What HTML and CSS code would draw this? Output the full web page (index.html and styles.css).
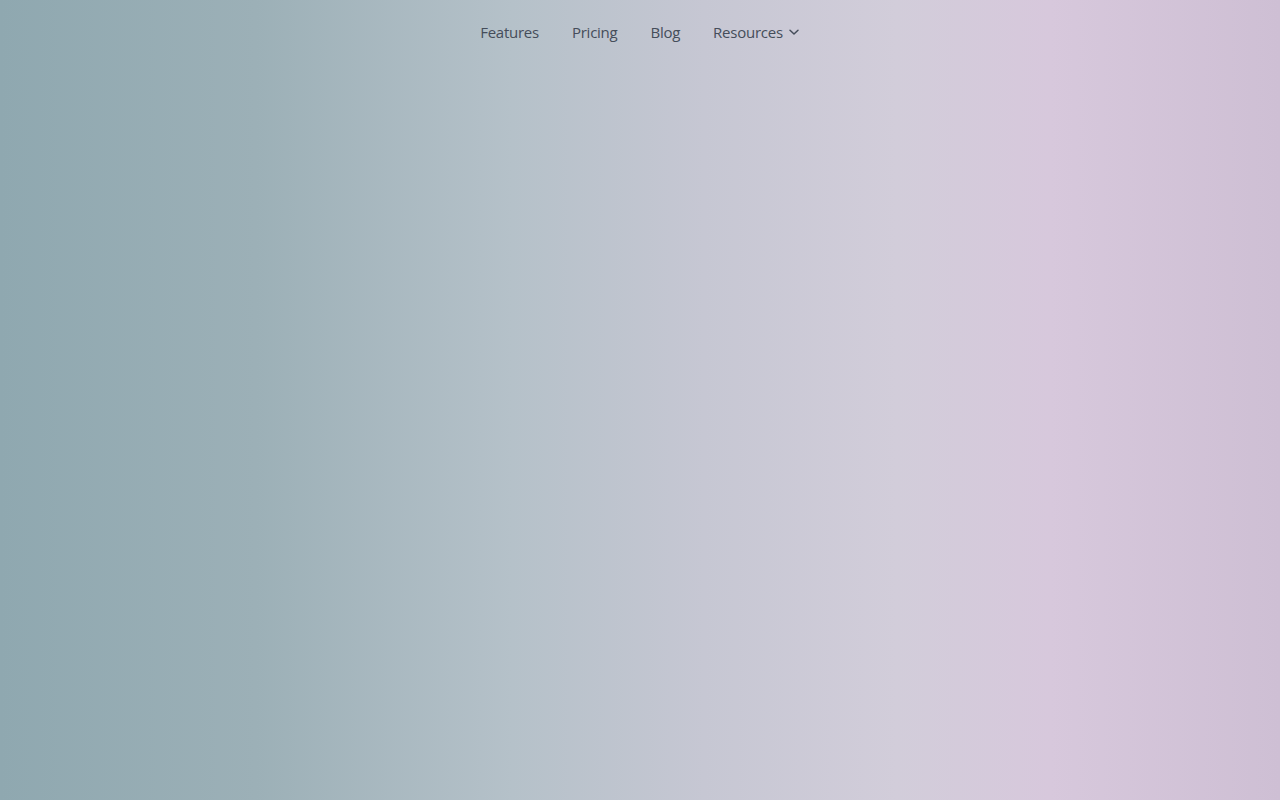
FILE: index.html
```html
<!DOCTYPE html>
<html lang="en">
<head>
<meta charset="utf-8">
<title>Home</title>
<link rel="stylesheet" href="styles.css">
</head>
<body>
<div class="page">
  <header class="topbar">
    <nav class="nav">
      <a class="nav-link" href="#">Features</a>
      <a class="nav-link" href="#">Pricing</a>
      <a class="nav-link" href="#">Blog</a>
      <a class="nav-link nav-drop" href="#">Resources
        <svg class="chev" width="12" height="12" viewBox="0 0 12 12" aria-hidden="true"><path d="M2 4.2 L6 8 L10 4.2" fill="none" stroke="currentColor" stroke-width="1.5" stroke-linecap="round" stroke-linejoin="round"/></svg>
      </a>
    </nav>
  </header>
</div>
</body>
</html>
```
FILE: styles.css
```css
html, body {
  margin: 0;
  padding: 0;
  height: 100%;
}
body {
  font-family: "Open Sans", "Noto Sans", "Liberation Sans", sans-serif;
}
.page {
  min-height: 100vh;
  background: linear-gradient(90deg, #8fa8b0 0%, #9cb0b7 20%, #b5c1c9 40%, #c6c7d3 55%, #d2cdda 70%, #d7c8dc 82%, #cebfd4 100%);
}
.topbar {
  display: flex;
  justify-content: center;
  padding-top: 20px;
}
.nav {
  display: flex;
  align-items: center;
  gap: 33px;
}
.nav-link {
  color: #454d5a;
  text-decoration: none;
  font-size: 15px;
  letter-spacing: -0.25px;
  line-height: 24px;
  display: flex;
  align-items: center;
}
.chev {
  margin-left: 5px;
}
```
